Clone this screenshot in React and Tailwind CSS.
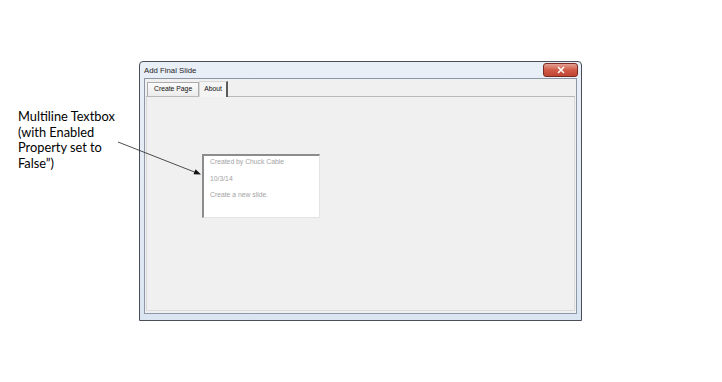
import React from 'react';

const font = { fontFamily: '"Liberation Sans", Arial, sans-serif' };
const noteFont = { fontFamily: 'Lato, "Open Sans", "Liberation Sans", sans-serif' };

const Annotation = () => (
  <div className="w-[139px] shrink-0 pl-[18px] pt-[48px] text-[12.8px] leading-[15.5px] text-black" style={noteFont}>
    <p>Multiline Textbox</p>
    <p>(with Enabled</p>
    <p>Property set to</p>
    <p>False”)</p>
  </div>
);

const CloseButton = () => (
  <div className="w-[35px] h-[14px] rounded-[3px] border border-[#7a2a22] bg-gradient-to-b from-[#e3a092] via-[#cf5a46] to-[#bf4531] flex items-center justify-center">
    <svg width="10" height="8" viewBox="0 0 10 8">
      <path d="M2 1 L8 7 M8 1 L2 7" stroke="#ffffff" strokeWidth="1.6" />
    </svg>
  </div>
);

const Tabs = () => (
  <div className="flex items-end h-[17px] pl-[1px] border-b border-[#b9b9b9] text-[6.8px] text-[#111]" style={font}>
    <div className="h-[14px] px-[6px] flex items-center bg-gradient-to-b from-[#fbfbfb] to-[#ececec] border border-b-0 border-[#acacac]">
      Create Page
    </div>
    <div className="h-[16px] px-[4px] -mb-px flex items-start pt-[2px] bg-[#f4f4f4] border-t border-l border-[#d8d8d8] border-r-2 border-r-[#5a5a5a]">
      About
    </div>
  </div>
);

const TextBox = () => (
  <div
    className="ml-[55px] mt-[57px] w-[118px] h-[64px] bg-white border-t-2 border-l-2 border-[#8c8c8c] border-r border-b border-r-[#e3e3e3] border-b-[#e3e3e3] pl-[6px] pt-[2px] text-[6.8px] text-[#a3a3a3] leading-[8px]"
    style={font}
  >
    <p>Created by Chuck Cable</p>
    <p className="mt-[9px]">10/3/14</p>
    <p className="mt-[8px]">Create a new slide.</p>
  </div>
);

const Window = () => (
  <div className="w-[443px] h-[260px] rounded-t-[4px] border border-[#4a4f57] bg-gradient-to-b from-[#e9eff7] to-[#dbe5f2] flex flex-col px-[4px] pb-[6px]">
    <div className="h-[16px] flex items-start justify-between">
      <span className="pt-[3px] text-[7.8px] text-[#1e1e1e]" style={font}>Add Final Slide</span>
      <div className="pt-px -mr-[1px]">
        <CloseButton />
      </div>
    </div>
    <div className="flex-1 bg-[#f0f0f0] border border-[#8e97a5] flex flex-col pt-[1px] px-[1px] pb-[2px]">
      <Tabs />
      <div className="flex-1 border-x border-b border-[#dadada] bg-[#f0f0f0]">
        <TextBox />
      </div>
    </div>
  </div>
);

export default function App() {
  return (
    <div className="relative w-[722px] h-[382px] bg-white overflow-hidden">
      <div className="flex pt-[61px]">
        <Annotation />
        <Window />
      </div>
      <svg className="absolute inset-0 pointer-events-none" width="722" height="382">
        <line x1="118" y1="142" x2="197" y2="173" stroke="#222" strokeWidth="0.8" />
        <path d="M201 174.5 L193.5 174.2 L195.6 169.3 Z" fill="#111" />
      </svg>
    </div>
  );
}
